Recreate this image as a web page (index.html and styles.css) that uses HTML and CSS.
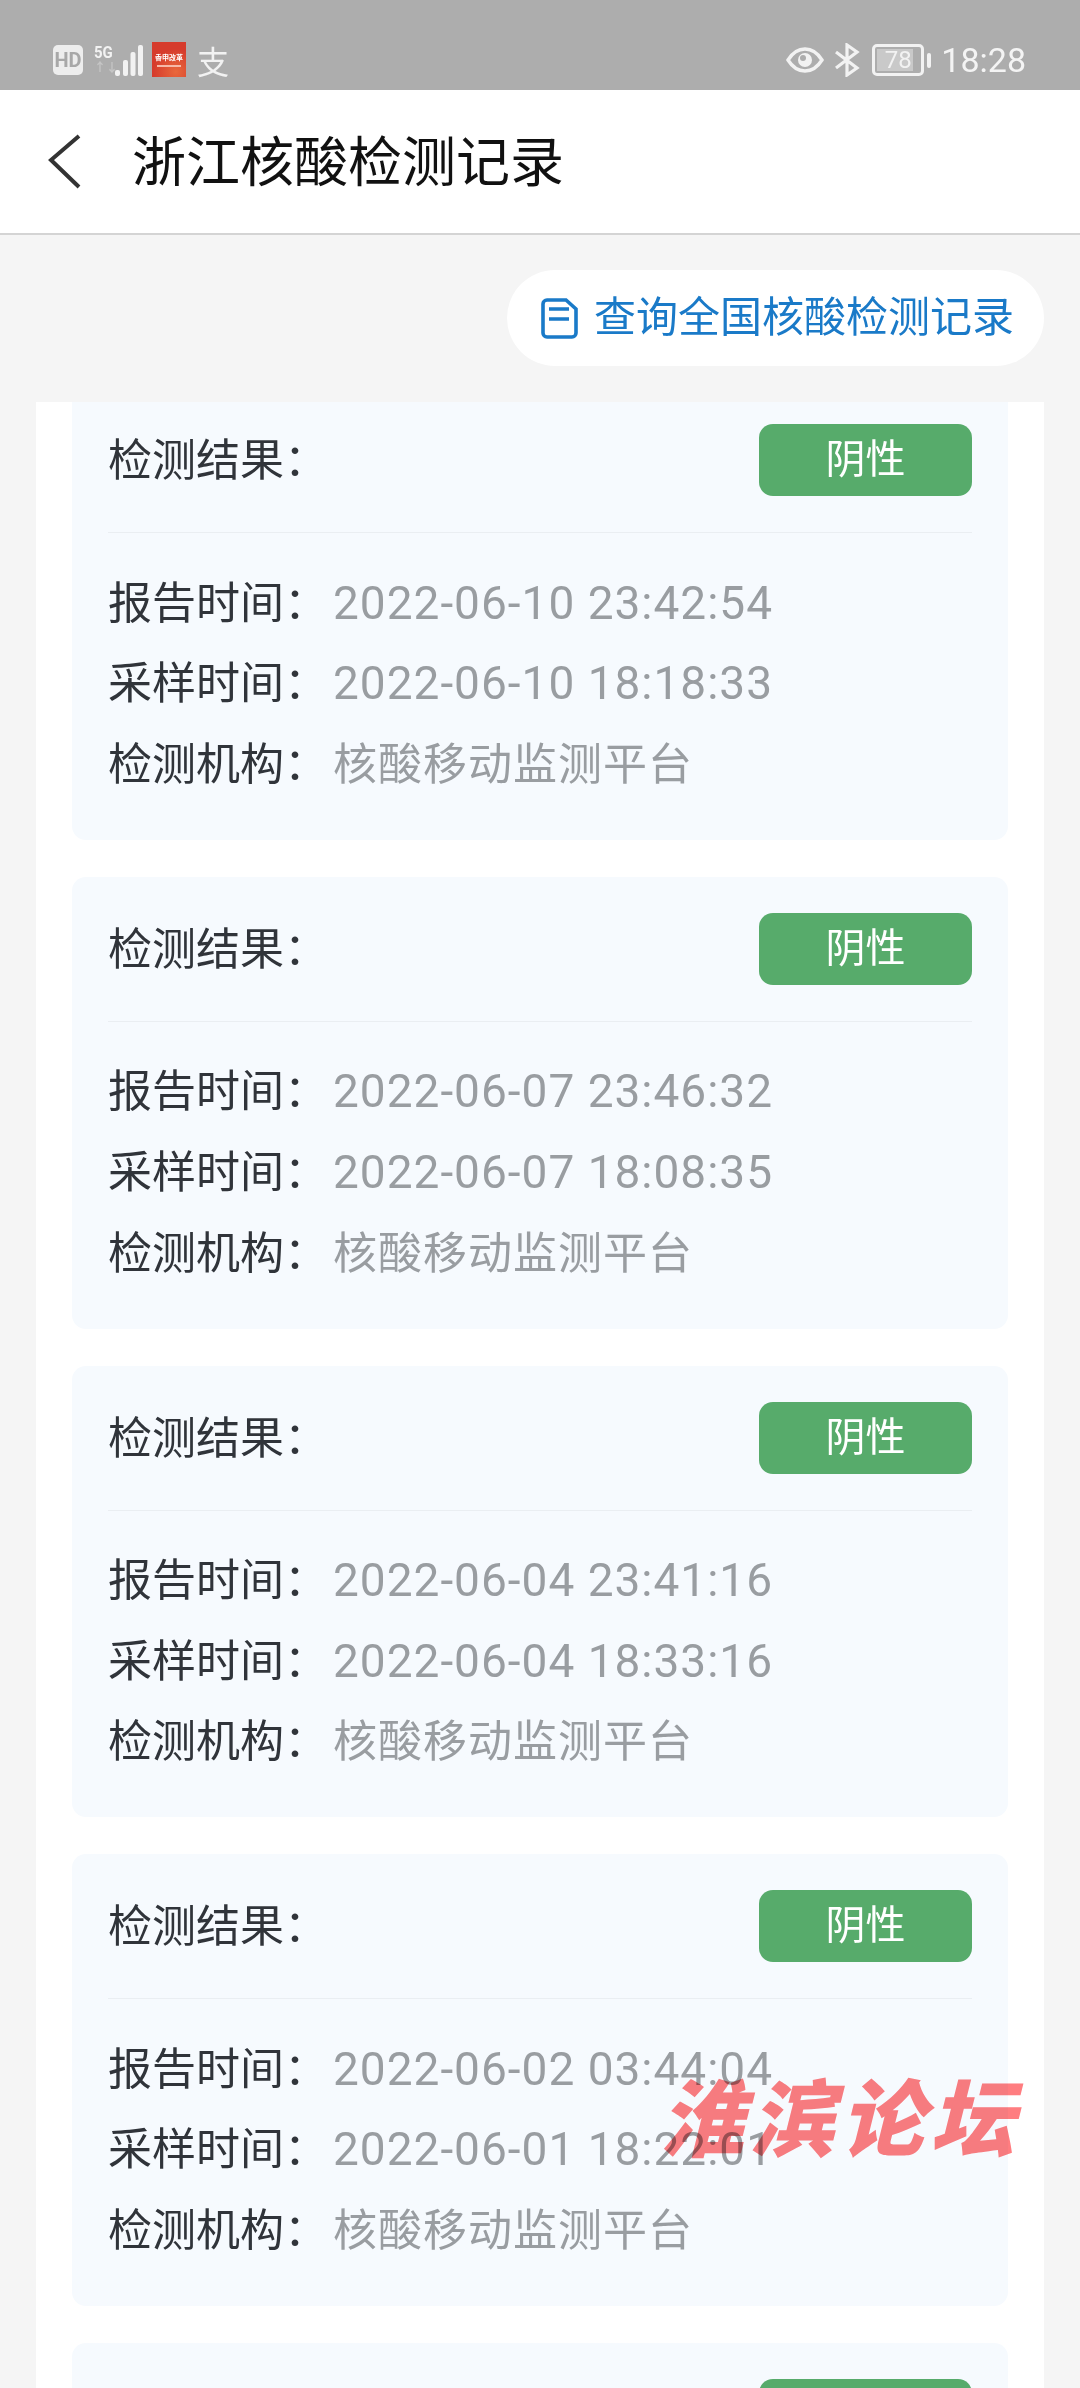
FILE: index.html
```html
<!DOCTYPE html>
<html lang="zh-CN">
<head>
<meta charset="utf-8">
<title>浙江核酸检测记录</title>
<link rel="stylesheet" href="styles.css">
</head>
<body>
<div class="screen">
  <div class="status">
    <div class="status-left">
      <span class="hd">HD</span>
      <span class="net">
        <span class="net-text"><span class="g5">5G</span><span class="g4">↑↓</span></span>
        <svg class="bars" width="28" height="31" viewBox="0 0 28 31"><g fill="#f2f2f2"><rect x="0" y="25" width="5" height="6" rx="2"/><rect x="8" y="15" width="5" height="16" rx="2"/><rect x="15.5" y="7" width="5" height="24" rx="2"/><rect x="23" y="0" width="5" height="31" rx="2"/></g></svg>
      </span>
      <span class="app-red"><span class="app-red-text">香申改革</span><span class="app-red-sub"></span></span>
      <span class="zhi">支</span>
    </div>
    <div class="status-right">
      <svg class="eye" width="38" height="28" viewBox="0 0 38 28"><path d="M2 14C7 6 13 3 19 3s12 3 17 11c-5 8-11 11-17 11S7 22 2 14z" fill="none" stroke="#f2f2f2" stroke-width="3.4"/><circle cx="19" cy="14" r="7" fill="#f2f2f2"/><circle cx="17" cy="12" r="3" fill="#adadad"/></svg>
      <svg width="26" height="34" viewBox="0 0 26 34"><path d="M2 9l21 16-10 7V2l10 7L2 25" fill="none" stroke="#f2f2f2" stroke-width="3.2"/></svg>
      <span class="battery"><span class="battery-body"><span class="battery-fill" style="width:78%"></span><span class="battery-num">78</span></span><span class="battery-cap"></span></span>
      <span class="clock">18:28</span>
    </div>
  </div>
  <header class="topbar">
    <svg class="back" width="34" height="56" viewBox="0 0 34 56"><path d="M31 2L3 26l28 27" fill="none" stroke="#333" stroke-width="4"/></svg>
    <h1 class="title">浙江核酸检测记录</h1>
  </header>
  <div class="action-row">
    <a class="query">
      <svg width="37" height="41" viewBox="0 0 37 41"><path d="M6 2h19l10 9v24a4 4 0 0 1-4 4H6a4 4 0 0 1-4-4V6a4 4 0 0 1 4-4z" fill="none" stroke="#1a7ac8" stroke-width="3.6"/><path d="M8 11h20M8 21h20" stroke="#1a7ac8" stroke-width="3.4"/></svg>
      <span class="query-text">查询全国核酸检测记录</span>
    </a>
  </div>
  <main class="panel">
    <section class="card first">
      <div class="card-head"><span class="label">检测结果&#xFF1A;</span><span class="tag">阴性</span></div>
      <div class="rows">
        <div class="row"><span class="label">报告时间&#xFF1A;</span><span class="val">2022-06-10 23:42:54</span></div>
        <div class="row"><span class="label">采样时间&#xFF1A;</span><span class="val">2022-06-10 18:18:33</span></div>
        <div class="row"><span class="label">检测机构&#xFF1A;</span><span class="val val-cjk">核酸移动监测平台</span></div>
      </div>
    </section>
    <section class="card">
      <div class="card-head"><span class="label">检测结果&#xFF1A;</span><span class="tag">阴性</span></div>
      <div class="rows">
        <div class="row"><span class="label">报告时间&#xFF1A;</span><span class="val">2022-06-07 23:46:32</span></div>
        <div class="row"><span class="label">采样时间&#xFF1A;</span><span class="val">2022-06-07 18:08:35</span></div>
        <div class="row"><span class="label">检测机构&#xFF1A;</span><span class="val val-cjk">核酸移动监测平台</span></div>
      </div>
    </section>
    <section class="card">
      <div class="card-head"><span class="label">检测结果&#xFF1A;</span><span class="tag">阴性</span></div>
      <div class="rows">
        <div class="row"><span class="label">报告时间&#xFF1A;</span><span class="val">2022-06-04 23:41:16</span></div>
        <div class="row"><span class="label">采样时间&#xFF1A;</span><span class="val">2022-06-04 18:33:16</span></div>
        <div class="row"><span class="label">检测机构&#xFF1A;</span><span class="val val-cjk">核酸移动监测平台</span></div>
      </div>
    </section>
    <section class="card">
      <div class="card-head"><span class="label">检测结果&#xFF1A;</span><span class="tag">阴性</span></div>
      <div class="rows">
        <div class="row"><span class="label">报告时间&#xFF1A;</span><span class="val">2022-06-02 03:44:04</span></div>
        <div class="row"><span class="label">采样时间&#xFF1A;</span><span class="val">2022-06-01 18:22:01</span></div>
        <div class="row"><span class="label">检测机构&#xFF1A;</span><span class="val val-cjk">核酸移动监测平台</span></div>
      </div>
    </section>
    <section class="card">
      <div class="card-head"><span class="label">检测结果&#xFF1A;</span><span class="tag">阴性</span></div>
    </section>
  </main>
  <div class="watermark">淮滨论坛</div>
</div>
</body>
</html>
```
FILE: styles.css
```css
* { box-sizing: border-box; }
html, body { margin: 0; padding: 0; }
body { background: #f5f5f5; font-family: Roboto, "Noto Sans CJK SC", sans-serif; }
.screen { position: relative; width: 1080px; height: 2388px; overflow: hidden; background: #f5f5f5; display: flex; flex-direction: column; }

.status { height: 90px; background: #adadad; display: flex; justify-content: space-between; align-items: flex-end; padding: 0 54px 13px 53px; color: #f2f2f2; flex: none; }
.status-left, .status-right { display: flex; align-items: center; }
.hd { width: 30px; height: 30px; background: #ededed; border-radius: 5px; color: #a8a8a8; font-size: 20px; font-weight: 700; line-height: 30px; text-align: center; }
.net { display: flex; align-items: flex-end; margin-left: 11px; }
.net-text { display: flex; flex-direction: column; width: 19px; font-size: 15px; line-height: 16px; font-weight: 700; }
.g5 { transform: scaleY(1.15); }
.g4 { opacity: .35; font-size: 12px; }
.bars { margin-left: 2px; }
.app-red { width: 34px; height: 35px; margin-left: 9px; background: radial-gradient(circle at 70% 85%, #e8683c, #d63b2c 60%); display: flex; flex-direction: column; align-items: center; justify-content: center; gap: 3px; overflow: hidden; }
.app-red-text { font-family: "Noto Sans CJK SC", sans-serif; font-size: 7px; line-height: 9px; color: #fff; white-space: nowrap; font-weight: 700; }
.app-red-sub { width: 24px; height: 2px; background: #f6b9a8; }
.zhi { font-family: "Noto Sans CJK SC", sans-serif; font-size: 32px; line-height: 34px; margin-left: 11px; color: #f2f2f2; }
.status-right { gap: 12px; }
.eye { margin-right: -2px; }
.battery { display: flex; align-items: center; gap: 3px; }
.battery-body { position: relative; width: 52px; height: 32px; border: 3px solid #f2f2f2; border-radius: 5px; overflow: hidden; display: block; }
.battery-fill { position: absolute; left: 2px; top: 2px; bottom: 2px; background: #c9c9c9; }
.battery-num { position: relative; display: block; text-align: center; font-size: 24px; line-height: 26px; color: #f2f2f2; }
.battery-cap { width: 4px; height: 15px; background: #f2f2f2; border-radius: 2px; }
.clock { font-size: 34px; line-height: 34px; color: #f4f4f4; margin-left: -2px; }

.topbar { height: 145px; background: #fff; border-bottom: 2px solid #d4d4d4; display: flex; align-items: center; padding-left: 48px; flex: none; }
.back { flex: none; }
.title { margin: 0 0 6px 50px; font-family: "Noto Sans CJK SC", sans-serif; font-size: 54px; line-height: 76px; font-weight: 400; color: #111; }

.action-row { display: flex; justify-content: flex-end; padding: 35px 36px 36px 0; flex: none; }
.query { height: 96px; width: 537px; background: #fff; border-radius: 48px; display: flex; align-items: center; padding-left: 34px; gap: 16px; color: #1a7ac8; font-family: "Noto Sans CJK SC", sans-serif; font-size: 42px; white-space: nowrap; }
.query-text { padding-bottom: 9px; }

.panel { margin: 0 36px; background: #fff; padding: 0 36px; overflow: hidden; flex: 1; min-height: 0; display: flex; flex-direction: column; gap: 37px; }
.card { background: #f6fafe; border-radius: 14px; padding: 0 36px; flex: none; }
.card.first { margin-top: -13.67px; }
.card-head { height: 145px; display: flex; align-items: center; justify-content: space-between; border-bottom: 1px solid #eaeef2; }
.tag { width: 213px; height: 72px; background: #57ab6b; border-radius: 14px; color: #fff; font-family: "Noto Sans CJK SC", sans-serif; font-size: 40px; line-height: 64px; text-align: center; }
.label { font-family: "Noto Sans CJK SC", sans-serif; font-size: 44px; line-height: 60px; padding-bottom: 6px; color: #30343a; white-space: nowrap; }
.rows { padding: 29px 0 35.67px; display: flex; flex-direction: column; }
.row { height: 80.67px; display: flex; align-items: center; }
.row .label { width: 225px; flex: none; }
.val { font-size: 46px; letter-spacing: 1px; color: #999da1; white-space: nowrap; }
.val-cjk { font-family: "Noto Sans CJK SC", sans-serif; font-size: 44px; line-height: 60px; padding-bottom: 6px; }

.watermark { position: absolute; left: 660px; top: 2066px; font-family: "Noto Sans CJK SC", sans-serif; font-weight: 900; font-style: italic; font-size: 84px; line-height: 96px; letter-spacing: 6px; color: #ff7d80; mix-blend-mode: multiply; white-space: nowrap; }
```
